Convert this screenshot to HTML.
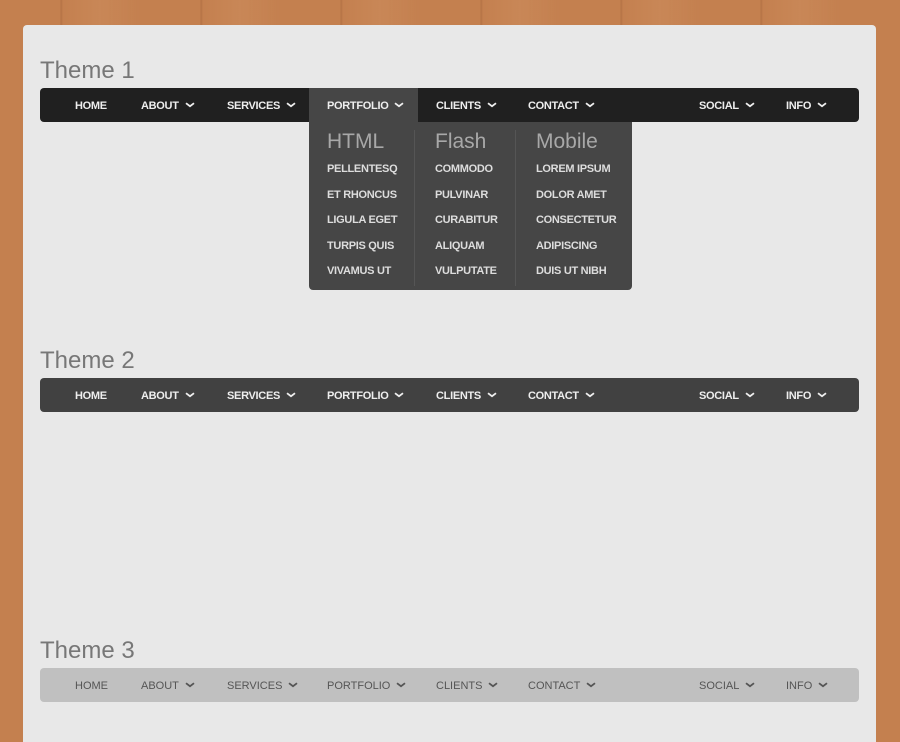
<!DOCTYPE html>
<html><head><meta charset="utf-8"><style>
*{margin:0;padding:0;box-sizing:border-box}
html,body{width:900px;height:742px;overflow:hidden}
body{background:#c4804f;background-image:repeating-linear-gradient(90deg,rgba(0,0,0,0) 0,rgba(0,0,0,0) 60px,rgba(90,40,10,.15) 61px,rgba(0,0,0,0) 63px,rgba(255,220,180,.08) 100px,rgba(0,0,0,0) 140px);font-family:"Liberation Sans",Arial,sans-serif;position:relative}
.panel{position:absolute;left:23px;top:25px;width:853px;height:740px;background:#e8e8e8;border-radius:4px}
h2{position:absolute;left:40px;font-weight:normal;font-size:24px;color:#777}
.bar{position:absolute;left:40px;width:819px;height:34px;border-radius:4px}
.bar span{position:absolute;top:1px;line-height:34px;font-size:11px;letter-spacing:-0.3px;font-weight:bold;color:#eee;white-space:nowrap}
.bar span svg{margin-left:6px;vertical-align:middle;position:relative;top:-1px}
.b1{top:88px;background:#202020}
.b2{top:378px;background:#414141}
.b3{top:668px;background:#c0c0c0}
.b3 span{color:#555;font-weight:normal;letter-spacing:0}
.hl{position:absolute;left:269px;top:0;width:109px;height:34px;background:#464646}
.dd{position:absolute;left:309px;top:122px;width:323px;height:168px;background:#464646;border-radius:0 0 4px 4px}
.dd .v{position:absolute;top:8px;width:1px;height:156px;background:#555}
.dd h3{position:absolute;top:8px;font-weight:normal;font-size:21px;color:#a8a8a8}
.dd b{position:absolute;font-size:11px;letter-spacing:-0.3px;color:#ddd}
</style></head><body>
<svg width="0" height="0" style="position:absolute"><defs><symbol id="c" viewBox="0 0 10 6"><path d="M1 1.2 L5 4.2 L9 1.2" fill="none" stroke="currentColor" stroke-width="1.8"/></symbol></defs></svg>
<div class="panel"></div>
<h2 style="top:57px">Theme 1</h2>
<div class="bar b1"><div class="hl"></div>
<span style="left:35px">HOME</span><span style="left:101px">ABOUT<svg width="10" height="6"><use href="#c"/></svg></span><span style="left:187px">SERVICES<svg width="10" height="6"><use href="#c"/></svg></span><span style="left:287px">PORTFOLIO<svg width="10" height="6"><use href="#c"/></svg></span><span style="left:396px">CLIENTS<svg width="10" height="6"><use href="#c"/></svg></span><span style="left:488px">CONTACT<svg width="10" height="6"><use href="#c"/></svg></span><span style="left:659px">SOCIAL<svg width="10" height="6"><use href="#c"/></svg></span><span style="left:746px">INFO<svg width="10" height="6"><use href="#c"/></svg></span></div>
<div class="dd">
<div class="v" style="left:105px"></div><div class="v" style="left:206px"></div>
<h3 style="left:18px">HTML</h3><h3 style="left:126px">Flash</h3><h3 style="left:227px">Mobile</h3>
<b style="left:18px;top:41px">PELLENTESQ</b><b style="left:18px;top:67px">ET RHONCUS</b><b style="left:18px;top:92px">LIGULA EGET</b><b style="left:18px;top:118px">TURPIS QUIS</b><b style="left:18px;top:143px">VIVAMUS UT</b>
<b style="left:126px;top:41px">COMMODO</b><b style="left:126px;top:67px">PULVINAR</b><b style="left:126px;top:92px">CURABITUR</b><b style="left:126px;top:118px">ALIQUAM</b><b style="left:126px;top:143px">VULPUTATE</b>
<b style="left:227px;top:41px">LOREM IPSUM</b><b style="left:227px;top:67px">DOLOR AMET</b><b style="left:227px;top:92px">CONSECTETUR</b><b style="left:227px;top:118px">ADIPISCING</b><b style="left:227px;top:143px">DUIS UT NIBH</b>
</div>
<h2 style="top:347px">Theme 2</h2>
<div class="bar b2">
<span style="left:35px">HOME</span><span style="left:101px">ABOUT<svg width="10" height="6"><use href="#c"/></svg></span><span style="left:187px">SERVICES<svg width="10" height="6"><use href="#c"/></svg></span><span style="left:287px">PORTFOLIO<svg width="10" height="6"><use href="#c"/></svg></span><span style="left:396px">CLIENTS<svg width="10" height="6"><use href="#c"/></svg></span><span style="left:488px">CONTACT<svg width="10" height="6"><use href="#c"/></svg></span><span style="left:659px">SOCIAL<svg width="10" height="6"><use href="#c"/></svg></span><span style="left:746px">INFO<svg width="10" height="6"><use href="#c"/></svg></span></div>
<h2 style="top:637px">Theme 3</h2>
<div class="bar b3">
<span style="left:35px">HOME</span><span style="left:101px">ABOUT<svg width="10" height="6"><use href="#c"/></svg></span><span style="left:187px">SERVICES<svg width="10" height="6"><use href="#c"/></svg></span><span style="left:287px">PORTFOLIO<svg width="10" height="6"><use href="#c"/></svg></span><span style="left:396px">CLIENTS<svg width="10" height="6"><use href="#c"/></svg></span><span style="left:488px">CONTACT<svg width="10" height="6"><use href="#c"/></svg></span><span style="left:659px">SOCIAL<svg width="10" height="6"><use href="#c"/></svg></span><span style="left:746px">INFO<svg width="10" height="6"><use href="#c"/></svg></span></div>
</body></html>
